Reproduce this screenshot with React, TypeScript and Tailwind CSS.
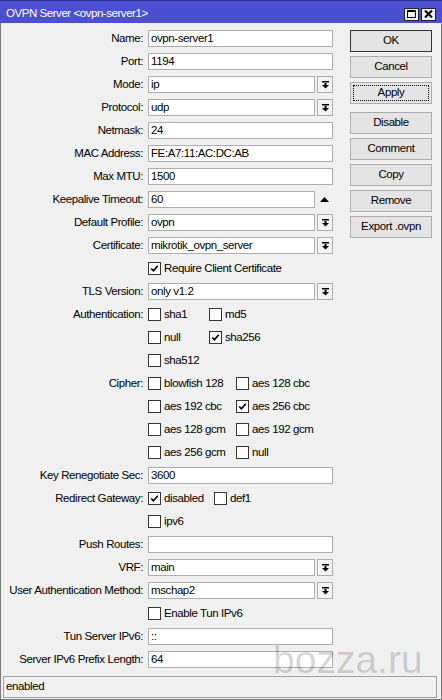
import React from "react";

function DropIcon() {
  return (
    <svg width="7" height="8" viewBox="0 0 7 8" className="fill-black">
      <rect x="0" y="0" width="7" height="1.5" />
      <rect x="2.5" y="2" width="2" height="2" />
      <path d="M0 4h7L3.5 7.5z" />
    </svg>
  );
}

function CheckMark() {
  return (
    <svg width="11" height="11" viewBox="0 0 11 11">
      <path d="M2.2 5.5 L4.4 7.8 L8.8 2.8" fill="none" stroke="black" strokeWidth="1.7" />
    </svg>
  );
}

function Row({ label, children }: { label?: string; children?: React.ReactNode }) {
  return (
    <div className="flex h-[23px] items-center">
      <div className="w-[142px] shrink-0 text-right whitespace-nowrap">{label ? label + ":" : ""}</div>
      <div className="ml-[5px] flex items-center">{children}</div>
    </div>
  );
}

function TextField({ value, w = "w-[185px]" }: { value: string; w?: string }) {
  return (
    <div className={`${w} h-[17px] border border-[#adadad] bg-white pl-[2px] flex items-center leading-none`}>
      {value}
    </div>
  );
}

function Select({ value }: { value: string }) {
  return (
    <div className="flex items-center gap-[2px]">
      <TextField value={value} w="w-[167px]" />
      <div className="w-[16px] h-[17px] border border-[#adadad] bg-[#f4f4f4] flex items-center justify-center">
        <DropIcon />
      </div>
    </div>
  );
}

function Check({ label, checked = false, w }: { label: string; checked?: boolean; w?: string }) {
  return (
    <div className={`flex items-center ${w ?? ""}`}>
      <div className="w-[13px] h-[13px] border border-[#333] bg-white flex items-center justify-center">
        {checked && <CheckMark />}
      </div>
      <span className="ml-[3px] whitespace-nowrap">{label}</span>
    </div>
  );
}

function Btn({ label, variant }: { label: string; variant?: "default" | "focus" }) {
  return (
    <div
      className={`h-[22px] w-[82px] border bg-[#e4e4e4] flex items-center justify-center ${
        variant === "default" ? "border-[#333]" : "border-[#adadad]"
      }`}
    >
      {variant === "focus" ? (
        <div className="w-[76px] h-[16px] border border-dotted border-black flex items-center justify-center">
          {label}
        </div>
      ) : (
        label
      )}
    </div>
  );
}

export default function App() {
  return (
    <div className="relative w-[442px] h-[700px] bg-[#f0f0f0] font-['Liberation_Sans',Arial,sans-serif] text-[11.5px] tracking-[-0.4px] text-black overflow-hidden">
      {/* title bar */}
      <div className="h-[23px] bg-[#4b50d1] flex items-center pt-[4px] pl-[6px] pr-[6px] border-t border-[#2f3290]">
        <span className="text-white text-[11.5px] tracking-[-0.45px] flex-1">OVPN Server &lt;ovpn-server1&gt;</span>
        <div className="flex gap-[2px]">
          <div className="w-[15px] h-[13px] bg-[#f0f0f0] border border-[#222] flex items-center justify-center">
            <div className="w-[9px] h-[8px] border border-black border-t-2" />
          </div>
          <div className="w-[15px] h-[13px] bg-[#f0f0f0] border border-[#222] flex items-center justify-center">
            <svg width="9" height="8" viewBox="0 0 9 8">
              <path d="M1 0.5 L8 7.5 M8 0.5 L1 7.5" stroke="black" strokeWidth="2" />
            </svg>
          </div>
        </div>
      </div>

      {/* body */}
      <div className="border-x border-b border-[#7a7a7a] h-[677px] pt-[4px] pb-[1px] flex flex-col">
        <div className="flex">
          <div className="w-[332px] shrink-0">
            <Row label="Name"><TextField value="ovpn-server1" /></Row>
            <Row label="Port"><TextField value="1194" /></Row>
            <Row label="Mode"><Select value="ip" /></Row>
            <Row label="Protocol"><Select value="udp" /></Row>
            <Row label="Netmask"><TextField value="24" /></Row>
            <Row label="MAC Address"><TextField value="FE:A7:11:AC:DC:AB" /></Row>
            <Row label="Max MTU"><TextField value="1500" /></Row>
            <Row label="Keepalive Timeout">
              <TextField value="60" w="w-[167px]" />
              <div className="w-[18px] flex justify-center">
                <svg width="9" height="5" viewBox="0 0 9 5"><path d="M0 5h9L4.5 0z" /></svg>
              </div>
            </Row>
            <Row label="Default Profile"><Select value="ovpn" /></Row>
            <Row label="Certificate"><Select value="mikrotik_ovpn_server" /></Row>
            <Row><Check label="Require Client Certificate" checked /></Row>
            <Row label="TLS Version"><Select value="only v1.2" /></Row>
            <Row label="Authentication">
              <Check label="sha1" w="w-[61px]" />
              <Check label="md5" />
            </Row>
            <Row>
              <Check label="null" w="w-[61px]" />
              <Check label="sha256" checked />
            </Row>
            <Row><Check label="sha512" /></Row>
            <Row label="Cipher">
              <Check label="blowfish 128" w="w-[88px]" />
              <Check label="aes 128 cbc" />
            </Row>
            <Row>
              <Check label="aes 192 cbc" w="w-[88px]" />
              <Check label="aes 256 cbc" checked />
            </Row>
            <Row>
              <Check label="aes 128 gcm" w="w-[88px]" />
              <Check label="aes 192 gcm" />
            </Row>
            <Row>
              <Check label="aes 256 gcm" w="w-[88px]" />
              <Check label="null" />
            </Row>
            <Row label="Key Renegotiate Sec"><TextField value="3600" /></Row>
            <Row label="Redirect Gateway">
              <Check label="disabled" checked w="w-[66px]" />
              <Check label="def1" />
            </Row>
            <Row><Check label="ipv6" /></Row>
            <Row label="Push Routes"><TextField value="" /></Row>
            <Row label="VRF"><Select value="main" /></Row>
            <Row label="User Authentication Method"><Select value="mschap2" /></Row>
            <Row><Check label="Enable Tun IPv6" /></Row>
            <Row label="Tun Server IPv6"><TextField value="::" /></Row>
            <Row label="Server IPv6 Prefix Length"><TextField value="64" /></Row>
          </div>

          {/* buttons */}
          <div className="ml-[17px] mt-[3px] flex flex-col gap-[4px]">
            <Btn label="OK" variant="default" />
            <Btn label="Cancel" />
            <Btn label="Apply" variant="focus" />
            <div className="mt-[4px]"><Btn label="Disable" /></div>
            <Btn label="Comment" />
            <Btn label="Copy" />
            <Btn label="Remove" />
            <Btn label="Export .ovpn" />
          </div>
        </div>

        <div className="mt-[5px] ml-[2px] mr-[4px] h-[22px] border border-[#a0a0a0] flex items-center pl-[2px]">
          enabled
        </div>
      </div>

      {/* watermark */}
      <div className="absolute left-[273px] top-[640px] text-[39px] leading-none tracking-normal text-black/[0.17] pointer-events-none">
        bozza.ru
      </div>
    </div>
  );
}
